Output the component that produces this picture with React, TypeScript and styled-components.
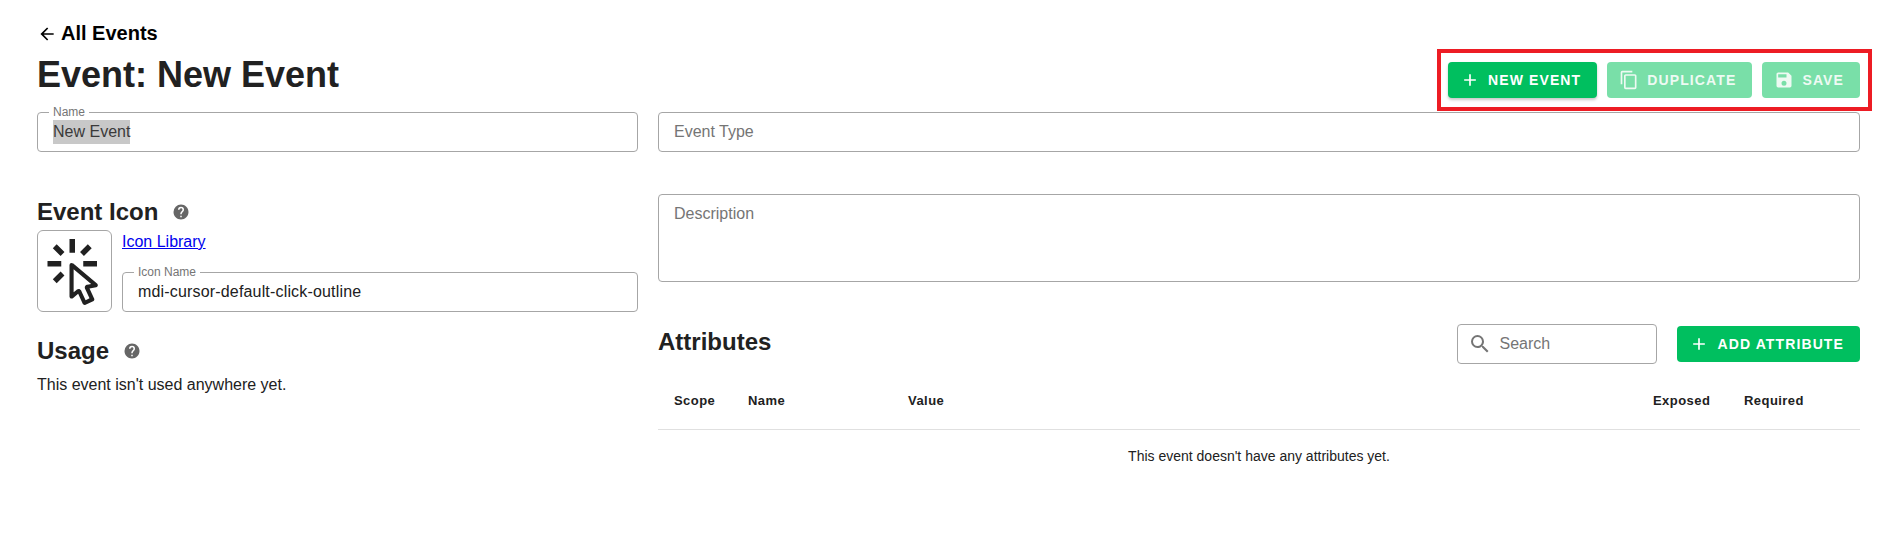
import React from "react";
import styled, { createGlobalStyle } from "styled-components";

const GlobalStyle = createGlobalStyle`
  html, body {
    margin: 0;
    padding: 0;
    background: #fff;
    color: #212121;
    font-family: "Liberation Sans", Arial, sans-serif;
  }
`;

const MDI = {
  arrowLeft: "M20,11V13H8L13.5,18.5L12.08,19.92L4.16,12L12.08,4.08L13.5,5.5L8,11H20Z",
  plus: "M19,13H13V19H11V13H5V11H11V5H13V11H19V13Z",
  copy: "M19,21H8V7H19M19,5H8A2,2 0 0,0 6,7V21A2,2 0 0,0 8,23H19A2,2 0 0,0 21,21V7A2,2 0 0,0 19,5M16,1H4A2,2 0 0,0 2,3V17H4V3H16V1Z",
  save: "M15,9H5V5H15M12,19A3,3 0 0,1 9,16A3,3 0 0,1 12,13A3,3 0 0,1 15,16A3,3 0 0,1 12,19M17,3H5C3.89,3 3,3.9 3,5V19A2,2 0 0,0 5,21H19A2,2 0 0,0 21,19V7L17,3Z",
  help: "M15.07,11.25L14.17,12.17C13.45,12.89 13,13.5 13,15H11V14.5C11,13.39 11.45,12.39 12.17,11.67L13.41,10.41C13.78,10.05 14,9.55 14,9C14,7.89 13.1,7 12,7A2,2 0 0,0 10,9H8A4,4 0 0,1 12,5A4,4 0 0,1 16,9C16,9.88 15.64,10.67 15.07,11.25M13,19H11V17H13M12,2A10,10 0 0,0 2,12C2,17.52 6.48,22 12,22C17.52,22 22,17.52 22,12C22,6.47 17.5,2 12,2Z",
  magnify: "M9.5,3A6.5,6.5 0 0,1 16,9.5C16,11.11 15.41,12.59 14.44,13.73L14.71,14H15.5L20.5,19L19,20.5L14,15.5V14.71L13.73,14.44C12.59,15.41 11.11,16 9.5,16A6.5,6.5 0 0,1 3,9.5A6.5,6.5 0 0,1 9.5,3M9.5,5C7,5 5,7 5,9.5C5,12 7,14 9.5,14C12,14 14,12 14,9.5C14,7 12,5 9.5,5Z",
  cursorClick: "M11.5,11L17.88,16.37L17,16.55L16.36,16.67C15.73,16.8 15.37,17.5 15.65,18.07L15.92,18.65L17.28,21.59L15.86,22.25L14.5,19.32L14.24,18.74C13.97,18.15 13.22,17.97 12.72,18.38L12.21,18.78L11.5,19.35V11M10.76,8.69A0.76,0.76 0 0,0 10,9.45V20.9C10,21.32 10.34,21.66 10.76,21.66C10.95,21.66 11.11,21.6 11.24,21.5L13.15,19.95L14.81,23.57C14.94,23.84 15.21,24 15.5,24C15.61,24 15.72,24 15.83,23.92L18.59,22.64C18.97,22.46 19.15,22 18.95,21.63L17.28,18L19.69,17.55C19.85,17.5 20,17.43 20.12,17.29C20.39,16.97 20.35,16.5 20,16.21L11.26,8.86L11.25,8.87C11.12,8.76 10.95,8.69 10.76,8.69M15,10V8H20V10H15M13.83,4.76L16.66,1.93L18.07,3.34L15.24,6.17L13.83,4.76M10,0H12V5H10V0M3.93,14.66L6.76,11.83L8.17,13.24L5.34,16.07L3.93,14.66M3.93,3.34L5.34,1.93L8.17,4.76L6.76,6.17L3.93,3.34M7,10H2V8H7V10",
};

const Icon: React.FC<{ path: string; size: number; color?: string }> = ({ path, size, color = "currentColor" }) => (
  <svg width={size} height={size} viewBox="0 0 24 24" fill={color} style={{ flex: "none", display: "block" }}>
    <path d={path} />
  </svg>
);

const Page = styled.div`
  padding: 22px 35px 0 37px;
`;

const BackLink = styled.a`
  display: flex;
  align-items: center;
  gap: 4px;
  height: 23px;
  font-size: 20px;
  font-weight: 700;
  color: #000;
  text-decoration: none;
`;

const Header = styled.div`
  display: flex;
  justify-content: space-between;
  align-items: flex-start;
  height: 67px;
`;

const Title = styled.h1`
  margin: 7px 0 0;
  font-size: 36px;
  line-height: 46px;
  font-weight: 700;
  color: #212121;
`;

const Actions = styled.div`
  display: flex;
  gap: 10px;
  margin: 4px -12px 0 0;
  padding: 9px 8px 9px 7px;
  border: 4px solid #ed1c24;
`;

const Button = styled.button<{ $disabled?: boolean }>`
  display: flex;
  align-items: center;
  justify-content: center;
  gap: 8px;
  height: 36px;
  padding: 0 16px 0 12px;
  border: 0;
  border-radius: 4px;
  background: ${(p) => (p.$disabled ? "#79dfa8" : "#00bf5f")};
  color: ${(p) => (p.$disabled ? "#eefaf3" : "#fff")};
  font-family: inherit;
  font-size: 14px;
  font-weight: 700;
  letter-spacing: 1.12px;
  text-transform: uppercase;
  white-space: nowrap;
  box-shadow: ${(p) => (p.$disabled ? "none" : "0 2px 3px rgba(0,0,0,.22)")};
`;

const FlatButton = styled(Button)`
  box-shadow: none;
`;

const Columns = styled.div`
  display: grid;
  grid-template-columns: 1fr 2fr;
  column-gap: 20px;
`;

const Column = styled.div`
  min-width: 0;
`;

const Field = styled.div<{ $height?: number; $top?: number }>`
  position: relative;
  box-sizing: border-box;
  height: ${(p) => p.$height ?? 40}px;
  margin-top: ${(p) => p.$top ?? 0}px;
  padding: ${(p) => (p.$height ? "7px 15px" : "0 15px")};
  display: flex;
  align-items: ${(p) => (p.$height ? "flex-start" : "center")};
  border: 1px solid #a6a6a6;
  border-radius: 4px;
  font-size: 16px;
  line-height: 24px;
`;

const FieldLabel = styled.span`
  position: absolute;
  top: -7px;
  left: 11px;
  padding: 0 4px;
  background: #fff;
  font-size: 12px;
  line-height: 12px;
  color: #757575;
`;

const Placeholder = styled.span`
  color: #757575;
`;

const FieldValue = styled.span`
  color: #212121;
  letter-spacing: 0.17px;
`;

const Selected = styled.span`
  background: #c8c8c8;
  color: #3a3a3a;
`;

const SectionTitle = styled.h2<{ $top: number }>`
  display: flex;
  align-items: center;
  gap: 14px;
  margin: ${(p) => p.$top}px 0 0;
  font-size: 24px;
  line-height: 28px;
  font-weight: 700;
  color: #212121;
`;

const IconRow = styled.div`
  display: flex;
  gap: 10px;
  margin-top: 4px;
`;

const IconBox = styled.div`
  box-sizing: border-box;
  flex: none;
  width: 75px;
  height: 82px;
  padding-top: 2px;
  display: flex;
  align-items: center;
  justify-content: center;
  border: 1px solid #a6a6a6;
  border-radius: 6px;
  color: #212121;
`;

const IconFields = styled.div`
  flex: 1;
  min-width: 0;
`;

const LibraryLink = styled.a`
  display: block;
  height: 24px;
  margin-bottom: 18px;
  font-size: 16px;
  line-height: 24px;
  color: #0000ee;
  text-decoration: underline;
`;

const Note = styled.p`
  margin: 8px 0 0;
  font-size: 16px;
  line-height: 24px;
  color: #212121;
`;

const AttributesBar = styled.div`
  display: flex;
  align-items: center;
  gap: 20px;
  height: 40px;
  margin-top: 42px;
`;

const AttributesTitle = styled.h2`
  flex: 1;
  margin: 0 0 4px;
  font-size: 24px;
  font-weight: 700;
  color: #212121;
`;

const SearchBox = styled.div`
  box-sizing: border-box;
  width: 200px;
  height: 40px;
  display: flex;
  align-items: center;
  gap: 7px;
  padding: 0 10px;
  border: 1px solid #a6a6a6;
  border-radius: 4px;
  font-size: 16px;
  color: #757575;
`;

const AttributesTable = styled.table`
  width: 100%;
  margin-top: 9px;
  table-layout: fixed;
  border-collapse: collapse;
`;

const HeadCell = styled.th<{ $width?: number }>`
  width: ${(p) => (p.$width ? `${p.$width}px` : "auto")};
  height: 56px;
  padding: 0 0 0 16px;
  box-sizing: border-box;
  border-bottom: 1px solid #e0e0e0;
  text-align: left;
  font-size: 13px;
  font-weight: 700;
  letter-spacing: 0.45px;
  color: #212121;
`;

const EmptyCell = styled.td`
  height: 52px;
  padding: 0;
  text-align: center;
  font-size: 14px;
  color: #212121;
`;

export default function App() {
  return (
    <Page>
      <GlobalStyle />
      <BackLink href="#">
        <Icon path={MDI.arrowLeft} size={20} />
        All Events
      </BackLink>
      <Header>
        <Title>Event: New Event</Title>
        <Actions>
          <Button>
            <Icon path={MDI.plus} size={20} />
            New Event
          </Button>
          <Button $disabled>
            <Icon path={MDI.copy} size={20} />
            Duplicate
          </Button>
          <Button $disabled>
            <Icon path={MDI.save} size={20} />
            Save
          </Button>
        </Actions>
      </Header>
      <Columns>
        <Column>
          <Field>
            <FieldLabel>Name</FieldLabel>
            <Selected>New Event</Selected>
          </Field>
          <SectionTitle $top={46}>
            Event Icon
            <Icon path={MDI.help} size={18} color="#666" />
          </SectionTitle>
          <IconRow>
            <IconBox>
              <Icon path={MDI.cursorClick} size={66} />
            </IconBox>
            <IconFields>
              <LibraryLink href="#">Icon Library</LibraryLink>
              <Field>
                <FieldLabel>Icon Name</FieldLabel>
                <FieldValue>mdi-cursor-default-click-outline</FieldValue>
              </Field>
            </IconFields>
          </IconRow>
          <SectionTitle $top={25}>
            Usage
            <Icon path={MDI.help} size={18} color="#666" />
          </SectionTitle>
          <Note>This event isn't used anywhere yet.</Note>
        </Column>
        <Column>
          <Field>
            <Placeholder>Event Type</Placeholder>
          </Field>
          <Field $height={88} $top={42}>
            <Placeholder>Description</Placeholder>
          </Field>
          <AttributesBar>
            <AttributesTitle>Attributes</AttributesTitle>
            <SearchBox>
              <Icon path={MDI.magnify} size={24} color="#757575" />
              Search
            </SearchBox>
            <FlatButton>
              <Icon path={MDI.plus} size={20} />
              Add Attribute
            </FlatButton>
          </AttributesBar>
          <AttributesTable>
            <thead>
              <tr>
                <HeadCell $width={74}>Scope</HeadCell>
                <HeadCell $width={160}>Name</HeadCell>
                <HeadCell>Value</HeadCell>
                <HeadCell $width={91}>Exposed</HeadCell>
                <HeadCell $width={132}>Required</HeadCell>
              </tr>
            </thead>
            <tbody>
              <tr>
                <EmptyCell colSpan={5}>This event doesn't have any attributes yet.</EmptyCell>
              </tr>
            </tbody>
          </AttributesTable>
        </Column>
      </Columns>
    </Page>
  );
}
